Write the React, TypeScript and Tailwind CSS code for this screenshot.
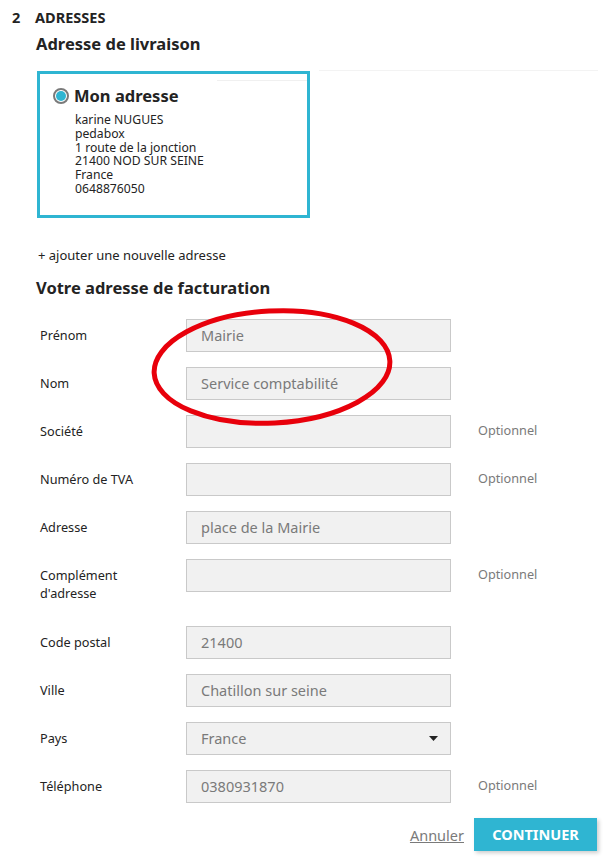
const fields = [
  { label: "Prénom", value: "Mairie" },
  { label: "Nom", value: "Service comptabilité" },
  { label: "Société", value: "", optional: true },
  { label: "Numéro de TVA", value: "", optional: true },
  { label: "Adresse", value: "place de la Mairie" },
  { label: "Complément d'adresse", value: "", optional: true, wrap: true },
  { label: "Code postal", value: "21400" },
  { label: "Ville", value: "Chatillon sur seine" },
  { label: "Pays", value: "France", select: true },
  { label: "Téléphone", value: "0380931870", optional: true },
]

const FieldRow = ({ label, value, optional, wrap, select }: { label: string; value: string; optional?: boolean; wrap?: boolean; select?: boolean }) => {
  return (
    <div className="flex items-start mb-[15px]">
      <div className={`w-[150px] pl-1 pt-[7px] text-[12.7px] leading-[18px] text-[#232323] ${wrap ? "pr-[64px] pb-[9px]" : "pb-[7px]"}`}>{label}</div>
      <div className="w-[265px] h-[33px] bg-[#f1f1f1] border border-[#c9c9c9] flex items-center justify-between pl-[14px] pr-[12px] text-[14.5px] text-[#7a7a7a]">
        <span>{value}</span>
        {select && (
          <svg width="9" height="5" viewBox="0 0 9 5"><path d="M0 0h9L4.5 5z" fill="#232323" /></svg>
        )}
      </div>
      {optional && <div className="ml-[27px] pt-[6px] text-[12.7px] leading-[18px] text-[#7a7a7a]">Optionnel</div>}
    </div>
  )
}

export default function App() {
  return (
    <div className="relative w-[605px] h-[860px] bg-white overflow-hidden" style={{ fontFamily: '"Noto Sans", "Open Sans", sans-serif' }}>
      <div className="pl-3 pt-[7px]">
        <h1 className="flex text-[14.5px] font-bold text-[#232323] leading-[20px] uppercase">
          <span className="w-[23px]">2</span>
          <span>Adresses</span>
        </h1>

        <div className="pl-6">
          <h2 className="mt-[6px] text-[16.5px] font-bold text-[#232323] leading-[22px]">Adresse de livraison</h2>

          <div className="flex items-start mt-[16px]">
            <div className="w-[273px] h-[147px] border-[3px] border-[#2fb5d2] ml-px relative">
              <div className="absolute right-0 top-[6px] w-[90px] border-t border-[#f0f0f0]" />
              <div className="flex items-center pl-[13px] pt-[11px]">
                <span className="w-[16px] h-[16px] rounded-full border-2 border-[#7a7a7a] flex items-center justify-center bg-white">
                  <span className="w-[10px] h-[10px] rounded-full bg-[#2fb5d2]" />
                </span>
                <span className="ml-[5px] text-[16.5px] font-bold text-[#232323] leading-[22px]">Mon adresse</span>
              </div>
              <div className="pl-[35px] pt-[6px] text-[12.2px] leading-[13.8px] text-[#232323]">
                <div>karine NUGUES</div>
                <div>pedabox</div>
                <div>1 route de la jonction</div>
                <div>21400 NOD SUR SEINE</div>
                <div>France</div>
                <div>0648876050</div>
              </div>
            </div>
            <div className="flex-1 ml-[9px] mr-[7px] -mt-px border-t border-[#f3f3f3]" />
          </div>

          <div className="mt-[28px] ml-[2px] text-[13px] leading-[18px] text-[#232323]">+ ajouter une nouvelle adresse</div>

          <h2 className="mt-[13px] text-[16.5px] font-bold text-[#232323] leading-[22px]">Votre adresse de facturation</h2>

          <div className="mt-[20px]">
            {fields.map((f) => (
              <FieldRow key={f.label} {...f} />
            ))}
          </div>

          <div className="flex items-center justify-end pr-[8px] mt-[1px]">
            <a className="text-[14.5px] text-[#7a7a7a] underline mr-[10px] mt-[2px]">Annuler</a>
            <button className="w-[123px] h-[33px] bg-[#2fb5d2] text-white text-[14.5px] font-bold uppercase shadow-[2px_2px_4px_rgba(0,0,0,0.2)]">Continuer</button>
          </div>
        </div>
      </div>

      <svg className="absolute left-0 top-0 pointer-events-none" width="605" height="860">
        <ellipse cx="272" cy="367" rx="118" ry="56" fill="none" stroke="#e8000b" strokeWidth="5" transform="rotate(-3 272 367)" />
      </svg>
    </div>
  )
}
